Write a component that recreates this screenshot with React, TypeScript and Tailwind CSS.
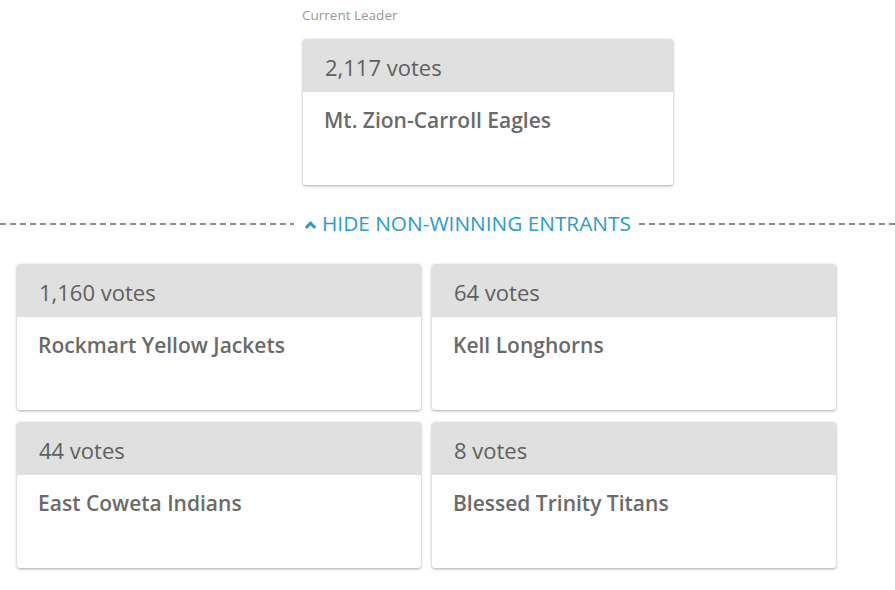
import React from "react";

const entrants = [
  { votes: "1,160 votes", name: "Rockmart Yellow Jackets" },
  { votes: "64 votes", name: "Kell Longhorns" },
  { votes: "44 votes", name: "East Coweta Indians" },
  { votes: "8 votes", name: "Blessed Trinity Titans" },
];

function Card({ votes, name, className }: { votes: string; name: string; className?: string }) {
  return (
    <div
      className={
        "rounded-[3px] bg-white overflow-hidden shadow-[0_1px_3px_rgba(0,0,0,0.35)] " + (className ?? "")
      }
    >
      <div className="h-[53px] bg-[#e0e0e0] flex items-center pl-[22px] pt-[3px] text-[22px] text-[#5f5f5f]">
        {votes}
      </div>
      <div className="h-[93px] pl-[21px] pt-[13px] text-[21px] leading-[30px] font-semibold text-[#6a6a6a]">
        {name}
      </div>
    </div>
  );
}

const dash =
  "h-[2px] bg-[repeating-linear-gradient(90deg,#8a8a8a_0px,#8a8a8a_6px,transparent_6px,transparent_10px)]";

export default function App() {
  return (
    <div
      className="w-[895px] h-[590px] bg-white relative"
      style={{ fontFamily: "'Open Sans', 'Noto Sans', sans-serif" }}
    >
      <div className="pl-[302px] pt-[6px]">
        <div className="text-[13.5px] text-[#9a9a9a] leading-[18px]">Current Leader</div>
        <Card votes="2,117 votes" name="Mt. Zion-Carroll Eagles" className="w-[370px] mt-[15px] ml-[1px]" />
      </div>
      <div className="flex items-center mt-[29px] h-[20px]">
        <div className={dash + " w-[294px]"}></div>
        <div className="flex items-center pl-[10px] pr-[8px] text-[20.8px] text-[#2b9bd0] gap-[5px]">
          <svg width="13" height="10" viewBox="0 0 13 10" className="mt-[1px]">
            <path d="M1.8 8 L6.5 3.2 L11.2 8" fill="none" stroke="#2b9bd0" strokeWidth="3" />
          </svg>
          <span>HIDE NON-WINNING ENTRANTS</span>
        </div>
        <div className={dash + " flex-1"}></div>
      </div>
      <div className="grid grid-cols-[404px_404px] gap-x-[11px] gap-y-[12px] pl-[17px] mt-[30px]">
        {entrants.map((e) => (
          <Card key={e.name} votes={e.votes} name={e.name} />
        ))}
      </div>
    </div>
  );
}
